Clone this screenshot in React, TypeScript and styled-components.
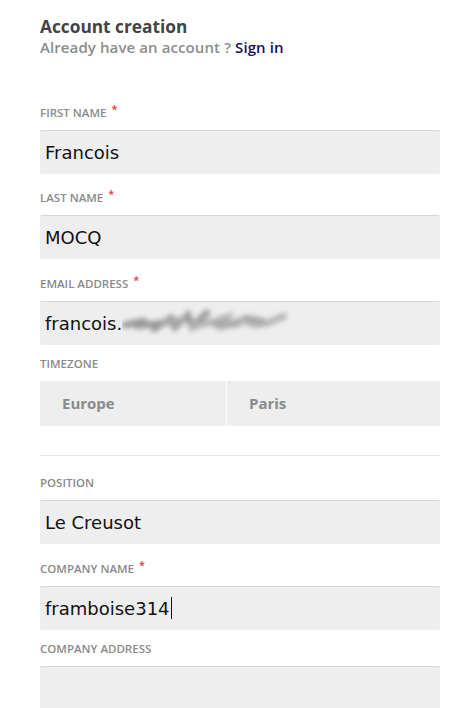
import styled, { createGlobalStyle } from "styled-components";

const GlobalStyle = createGlobalStyle`
  body {
    margin: 0;
    background: #fff;
    font-family: "Open Sans", "Liberation Sans", sans-serif;
  }
`;

const Page = styled.div`
  width: 400px;
  padding: 17px 0 0 40px;
`;

const Title = styled.h1`
  margin: 0;
  font-size: 17.3px;
  line-height: 20px;
  font-weight: 700;
  color: #444;
`;

const Subtitle = styled.p`
  margin: 0;
  font-size: 15px;
  line-height: 20px;
  font-weight: 600;
  color: #8c8c8c;
  letter-spacing: 0.1px;
`;

const SignIn = styled.a`
  color: #1b0d5e;
  text-decoration: none;
`;

const Form = styled.div`
  margin-top: 43px;
  display: flex;
  flex-direction: column;
`;

const Field = styled.div<{ $required?: boolean }>`
  margin-top: ${(p) => (p.$required ? 5 : 0)}px;
  margin-bottom: 11.33px;
`;

const Label = styled.label`
  display: block;
  font-size: 11.5px;
  line-height: 16px;
  font-weight: 600;
  color: #8a8a8a;
  letter-spacing: 0;
  margin-bottom: 9px;
`;

const Star = styled.span`
  color: #e53935;
  font-size: 11px;
  position: relative;
  top: -4px;
  margin-left: 5px;
`;

const Box = styled.div<{ $tall?: boolean }>`
  box-sizing: border-box;
  height: ${(p) => (p.$tall ? 60 : 44)}px;
  background: #eeeeee;
  border-top: 1px solid #d6d6d6;
  border-radius: 2px;
  display: flex;
  align-items: center;
  padding: 0 5px;
  font-family: "DejaVu Sans", Verdana, sans-serif;
  font-size: 18px;
  color: #111;
`;

const Caret = styled.span`
  display: inline-block;
  width: 1px;
  height: 22px;
  background: #111;
  margin-left: 1px;
`;

const SelectRow = styled.div`
  display: grid;
  grid-template-columns: 186px 1fr;
  gap: 1px;
  height: 45px;
`;

const SelectCell = styled.div<{ $side: "left" | "right" }>`
  background: #eeeeee;
  border-radius: ${(p) => (p.$side === "left" ? "2px 0 0 2px" : "0 2px 2px 0")};
  display: flex;
  align-items: center;
  padding-left: 22px;
  font-size: 15px;
  font-weight: 700;
  color: #8a8a8a;
`;

const Divider = styled.hr`
  border: none;
  border-top: 1px solid #e6e6e6;
  margin: 18px 0 19px;
`;

const Smudge = () => (
  <svg width="172" height="34" viewBox="0 0 172 34">
    <defs>
      <filter id="blur" x="-10%" y="-50%" width="120%" height="200%">
        <feGaussianBlur stdDeviation="2.6" />
      </filter>
    </defs>
    <g filter="url(#blur)" stroke="#9a9a9a" strokeWidth="6.5" fill="none" strokeLinecap="round">
      <path d="M3 19 L22 15 M15 20 L40 17 M32 23 L49 12 L53 21 L66 9 L70 21 L85 7" />
      <path d="M70 21 L90 16 L106 11 L102 20 L120 14 L133 19 L146 17 L162 10" stroke="#b4b4b4" />
      <path d="M42 17 L62 14 M94 19 L116 18 M124 12 L140 15" stroke="#a8a8a8" />
    </g>
  </svg>
);

export default function App() {
  return (
    <Page>
      <GlobalStyle />
      <Title>Account creation</Title>
      <Subtitle>
        Already have an account ? <SignIn href="#">Sign in</SignIn>
      </Subtitle>
      <Form>
        <Field $required>
          <Label>
            FIRST NAME<Star>*</Star>
          </Label>
          <Box>Francois</Box>
        </Field>
        <Field $required>
          <Label>
            LAST NAME<Star>*</Star>
          </Label>
          <Box>MOCQ</Box>
        </Field>
        <Field $required>
          <Label>
            EMAIL ADDRESS<Star>*</Star>
          </Label>
          <Box>
            francois.
            <Smudge />
          </Box>
        </Field>
        <Field>
          <Label>TIMEZONE</Label>
          <SelectRow>
            <SelectCell $side="left">Europe</SelectCell>
            <SelectCell $side="right">Paris</SelectCell>
          </SelectRow>
        </Field>
        <Divider />
        <Field>
          <Label>POSITION</Label>
          <Box>Le Creusot</Box>
        </Field>
        <Field $required>
          <Label>
            COMPANY NAME<Star>*</Star>
          </Label>
          <Box>
            framboise314
            <Caret />
          </Box>
        </Field>
        <Field>
          <Label>COMPANY ADDRESS</Label>
          <Box $tall />
        </Field>
      </Form>
    </Page>
  );
}
